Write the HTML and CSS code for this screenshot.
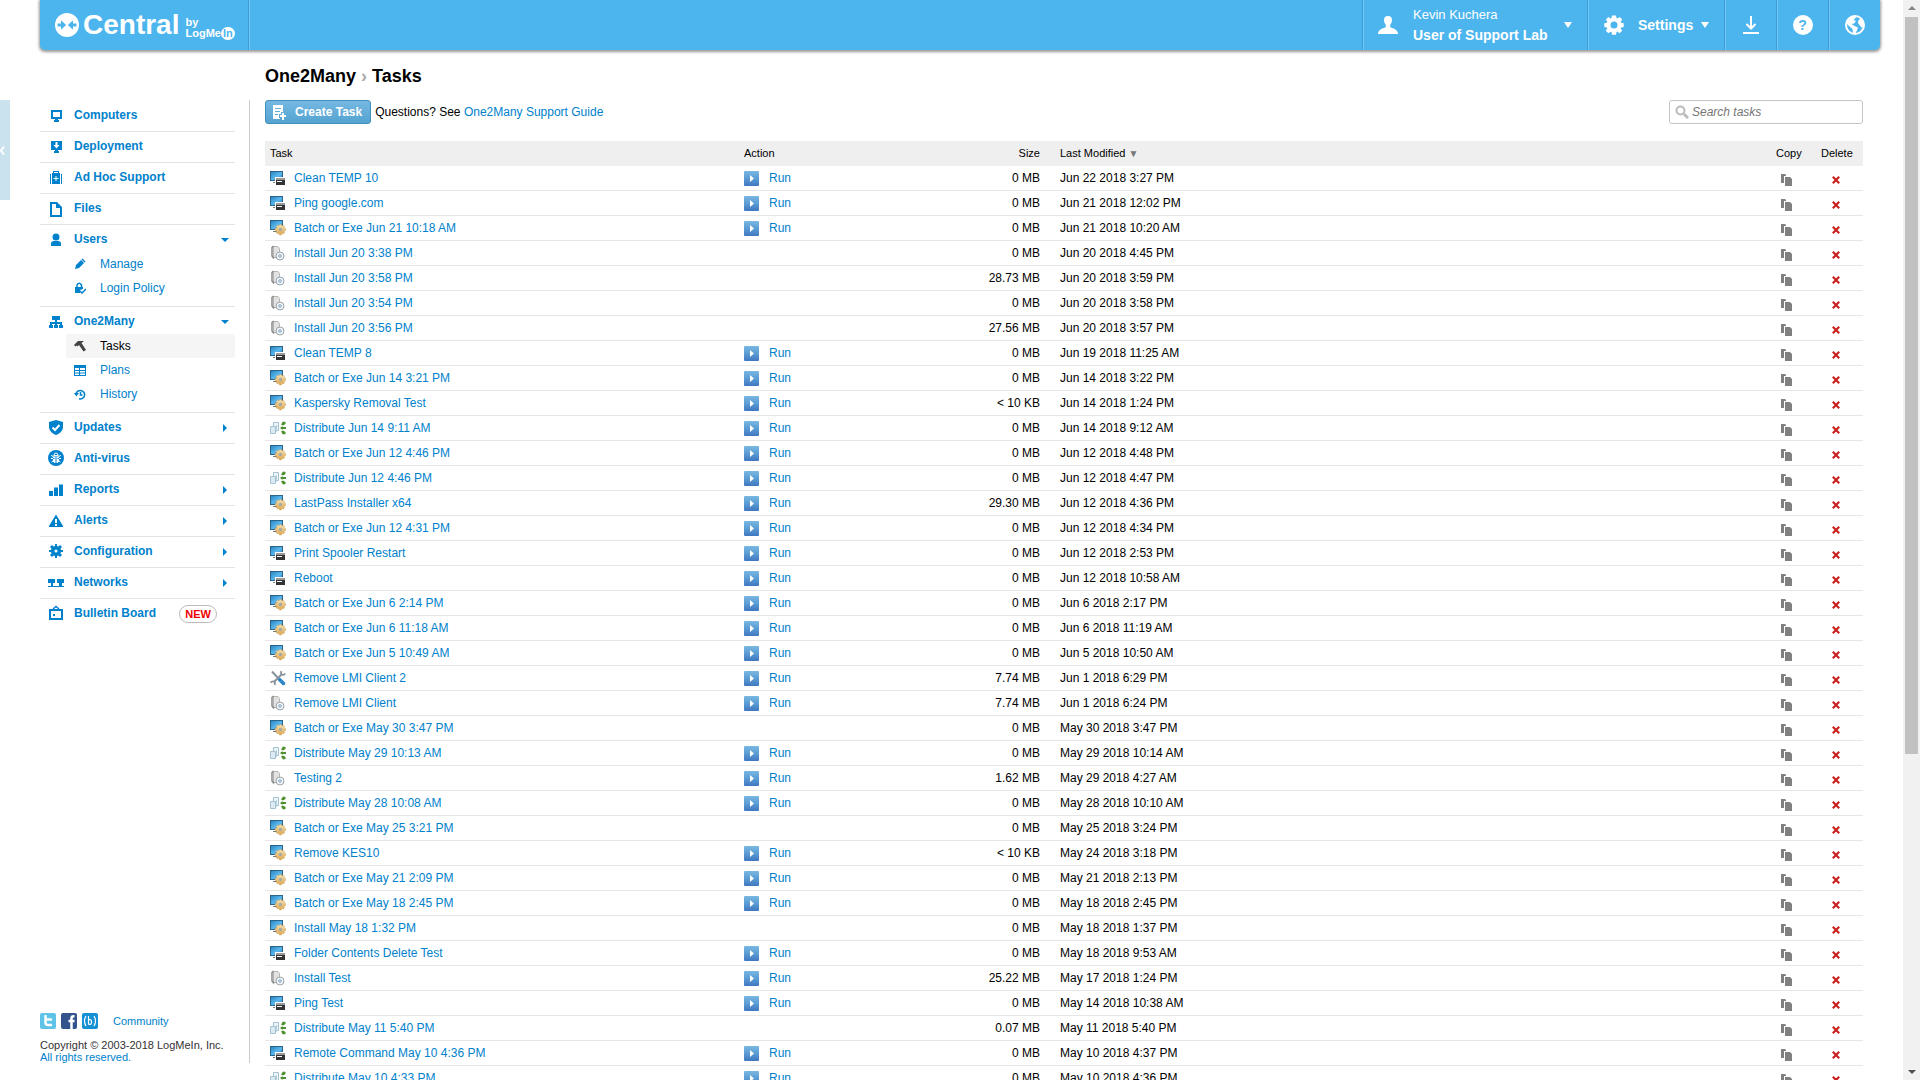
FILE: index.html
```html
<!DOCTYPE html>
<html lang="en">
<head>
    <meta charset="UTF-8">
    <title>One2Many Tasks</title>
    <link rel="stylesheet" href="styles.css">
</head>
<body>
    <!-- shared icons -->
    <svg class="defs" aria-hidden="true">
        <defs>
            <linearGradient id="screen" x1="0" y1="0" x2="1" y2="1"><stop offset="0" stop-color="#2a86c0"/><stop offset=".55" stop-color="#5bb8ee"/><stop offset="1" stop-color="#1d6fa8"/></linearGradient>
            <linearGradient id="gold" x1="0" y1="0" x2="0" y2="1"><stop offset="0" stop-color="#f7e2b5"/><stop offset="1" stop-color="#dba54a"/></linearGradient>
            <linearGradient id="play" x1="0" y1="0" x2="0" y2="1"><stop offset="0" stop-color="#7ab8e2"/><stop offset=".5" stop-color="#5a9cd4"/><stop offset="1" stop-color="#3f77c0"/></linearGradient>
        </defs>
        <symbol id="i-command" viewBox="0 0 16 16"><path fill="#2b6488" d="M0 1h13v10H0z"/><path fill="url(#screen)" d="M1 2h11v8H1z"/><path fill="#777" d="M3 12h4v1H3z"/><path fill="#fff" d="M5 7h10v1H6v6H5z"/><path fill="#333" d="M6 8h9v7H6z"/><path fill="#999" d="M6 8h9v2H6z"/><path fill="#fff" d="M7 11h5v1H7z"/></symbol>
        <symbol id="i-batch" viewBox="0 0 16 16"><path fill="#2b6488" d="M0 0h13v10H0z"/><path fill="url(#screen)" d="M1 1h11v8H1z"/><path fill="#777" d="M3 11h4v1H3z"/><g fill="url(#gold)" stroke="#c99b4e" stroke-width=".4"><path d="M9.500 4.500h2l.4 1.500 1.300-.9 1.500 1.500-.8 1.400 1.900.5v2l-1.900.5.8 1.400-1.500 1.500-1.400-.8-.4 1.900h-2l-.4-1.900-1.400.8-1.500-1.500.8-1.400-1.900-.5v-2l1.900-.5-.8-1.400 1.500-1.500 1.300.9z"/></g><circle cx="10.500" cy="9.500" r="1.700" fill="#a7a9a5"/></symbol>
        <symbol id="i-install" viewBox="0 0 16 16"><path fill="#e2e2e2" stroke="#b5b5b5" d="M3.500 1.500 8 1.500l1.500 2v9h-6z"/><path stroke="#8a8a8a" stroke-width="1.500" fill="none" d="M3.500 1 2 2.500v8.500l2 2.500"/><circle cx="10" cy="11" r="4" fill="#f3f5f8" stroke="#9aa3ab"/><circle cx="10" cy="11" r="1.300" fill="#fff" stroke="#7aa0c0"/></symbol>
        <symbol id="i-distribute" viewBox="0 0 16 16"><path fill="#eef5f9" stroke="#a5c2d2" d="M3.500 2.500h5v8h-5z"/><path fill="#dcebf3" stroke="#a5c2d2" d="M.5 6.500h5v7h-5z"/><path fill="none" stroke="#b9d1dd" d="M6.500 5v7"/><path fill="#4f8f2c" d="m10 8 2.500-2v1H16v2h-3.500v1zM11 4.500 13 1.500l2.500.5v2L13 5.500zM11 11.500l2-1 2.500 1.500v2l-2.500.5z"/></symbol>
        <symbol id="i-tools" viewBox="0 0 16 16"><path fill="none" stroke="#8b9298" stroke-width="2" d="M2 1.500 9 9"/><path fill="none" stroke="#2a86c8" stroke-width="3.500" stroke-linecap="round" d="m9.500 9.500 4 4"/><path fill="none" stroke="#8b9298" stroke-width="2" d="m4 12 8-8"/><path fill="none" stroke="#8b9298" stroke-width="1.800" d="M11.500 1.200c-1 2-.2 3.500 1.200 3.700 1 .1 2-.4 2.600-1.400M4.500 15c1-2 .2-3.500-1.200-3.700-1-.1-2 .4-2.600 1.400"/></symbol>
        <symbol id="i-run" viewBox="0 0 15 15"><rect width="15" height="15" rx="1" fill="url(#play)"/><path fill="#fff" d="m6 4 4 3.500L6 11z"/></symbol>
        <symbol id="i-copy" viewBox="0 0 12 12"><path fill="#808080" d="M0 0h4l1 1v1H3v7H0zM4 3h5l2 2v7H4z"/></symbol>
        <symbol id="i-delete" viewBox="0 0 8 8"><path fill="none" stroke="#c92020" stroke-width="2.200" d="m.8.800 6.400 6.400m0-6.400L.8 7.200"/></symbol>
        <symbol id="i-gear" viewBox="0 0 20 20"><path fill-rule="evenodd" d="M8 .5h4l.5 2.600 1 .4 2.200-1.500 2.500 2.500-1.500 2.200.4 1 2.600.5v3.800l-2.600.5-.4 1 1.500 2.200-2.500 2.500-2.200-1.500-1 .4-.5 2.600H8l-.5-2.600-1-.4-2.200 1.500-2.500-2.500 1.500-2.200-.4-1L.3 12V8.200l2.600-.5.4-1-1.500-2.200L4.300 2l2.200 1.500 1-.4zM10 6.600a3.500 3.500 0 1 0 0 7 3.500 3.500 0 0 0 0-7z"/></symbol>
    </svg>

    <div class="page">
        <button class="collapse" type="button" aria-label="Collapse menu"><svg width="5" height="9" viewBox="0 0 5 9"><path d="M4 .5 1 4.500l3 4" fill="none" stroke="#fff" stroke-width="2"/></svg></button>

        <div class="shell">
            <header class="topbar">
                <a class="logo" href="#">
                    <svg width="24" height="24" viewBox="0 0 24 24"><circle cx="12" cy="12" r="12" fill="#fff"/><path fill="#4db5ee" d="M2.500 10.500H6V7.500c2 1 3 3 5.200 4.500C9 13.500 8 15.500 6 16.500v-3H2.500zM21.500 10.500H18V7.500c-2 1-3 3-5.200 4.500 2.200 1.500 3.200 3.500 5.200 4.500v-3h3.500z"/></svg>
                    <span class="logo-name">Central</span>
                    <span class="logo-by">by<br>LogMe<i>In</i></span>
                </a>
                <button class="top-item user" type="button">
                    <svg width="20" height="18" viewBox="0 0 20 18"><path fill="#fff" d="M10 0c3 0 4.200 2 4 4.500-.2 2-1 3.200-1.800 4.200v2.500c1.800 1 7.800 1.600 7.800 6.800H0c0-5.200 6-5.800 7.800-6.800V8.700C7 7.700 6.200 6.500 6 4.500 5.800 2 7 0 10 0z"/></svg>
                    <span class="user-text">Kevin Kuchera<b>User of Support Lab</b></span>
                    <span class="caret"></span>
                </button>
                <button class="top-item settings" type="button">
                    <svg width="20" height="20" fill="#fff"><use href="#i-gear"/></svg>
                    <b>Settings</b>
                    <span class="caret"></span>
                </button>
                <button class="top-item square" type="button" aria-label="Download"><svg width="16" height="18" viewBox="0 0 16 18"><path fill="none" stroke="#fff" stroke-width="2" d="M8 0v12M3.500 8 8 12.500 12.500 8M0 17h16"/></svg></button>
                <button class="top-item square" type="button" aria-label="Help"><span class="help">?</span></button>
                <button class="top-item square" type="button" aria-label="Language"><svg width="20" height="20" viewBox="0 0 20 20"><circle cx="10" cy="10" r="9" fill="#4db5ee" stroke="#fff" stroke-width="2"/><path fill="#fff" d="M1 8c1-4 4-7 8-7l2 1.500L8.500 5l2.500 1-2 2.500L6.500 9l3 2 3.500 1.500-1 3-2 3.500-2-1-.5-4L4 11zM13.500 5 16 3.500c2 2 3 4 3 7l-2 2.500-2.500-3-1.500-2z"/></svg></button>
            </header>

            <div class="columns">
                <aside class="sidebar">
                    <ul class="menu">
                        <li><a href="#"><svg viewBox="0 0 16 16"><path fill-rule="evenodd" d="M3 3h11v9H3zm2 2v5h7V5zM7 12h3v1h1v2H6v-2h1z"/></svg>Computers</a></li>
                        <li><a href="#"><svg viewBox="0 0 16 16"><path fill-rule="evenodd" d="M3 3h11v9h-4v1h1v2H6v-2h1v-1H3zm4.500 1v3H5.500l3 3.500 3-3.500h-2V4z"/></svg>Deployment</a></li>
                        <li><a href="#"><svg viewBox="0 0 16 16"><path fill-rule="evenodd" d="M2 5h1v10H2zm11 0h1v10h-1zM4 4h1V2h6v2h1v11H4zm2 0h4V3H6zm1.500 3v2h-2v1h2v2h1v-2h2V9h-2V7z"/></svg>Ad Hoc Support</a></li>
                        <li><a href="#"><svg viewBox="0 0 16 16"><path fill-rule="evenodd" d="M2 2h7l5 5v10H2zm2 2v11h8V8H8V4z"/></svg>Files</a></li>
                        <li class="open"><a href="#"><svg viewBox="0 0 16 16"><circle cx="8" cy="6" r="3.500"/><path d="M3 15v-2c0-2 1-3 3-3h4c2 0 3 1 3 3v2z"/></svg>Users</a>
                            <ul>
                                <li><a href="#"><svg viewBox="0 0 12 12"><path d="m1 11 1-4 5-5 3 3-5 5zM7.500 1.500l1-1 3 3-1 1z"/></svg>Manage</a></li>
                                <li><a href="#"><svg viewBox="0 0 12 12"><path fill="none" stroke="currentColor" stroke-width="1.500" d="M3 5V3q2-3.500 4.500 0v2"/><path d="M1 5h8v2L6 8v3H1z"/><path fill="none" stroke="currentColor" stroke-width="1.500" d="m6 9 2 2 4-4"/></svg>Login Policy</a></li>
                            </ul>
                        </li>
                        <li class="open"><a href="#"><svg viewBox="0 0 16 16"><path d="M4 3h8v4H9v2h5v3h1v3h-4v-3h1v-1H9v1h1v3H6v-3h1v-1H4v1h1v3H1v-3h1V9h5V7H4z"/></svg>One2Many</a>
                            <ul>
                                <li class="current"><a href="#"><svg viewBox="0 0 12 12"><path d="m0 5 4-4h6L7.500 3 12 10l-2.500 1.500L5 5 3.500 6.500 2.500 5.500 1.500 6.500z"/></svg>Tasks</a></li>
                                <li><a href="#"><svg viewBox="0 0 12 12"><path fill-rule="evenodd" d="M0 1h12v11H0zm1 3v2h4V4zm5 0v2h5V4zM1 7v1.500h4V7zm5 0v1.500h5V7zM1 9.500V11h4V9.500zm5 0V11h5V9.500z"/></svg>Plans</a></li>
                                <li><a href="#"><svg viewBox="0 0 12 12"><path fill="none" stroke="currentColor" stroke-width="1.500" d="M2 6.500a4.300 4.300 0 1 1 3 4.300M6.500 4v3h2"/><path d="M0 5h5L2.300 8.500z"/></svg>History</a></li>
                            </ul>
                        </li>
                        <li class="more"><a href="#"><svg viewBox="0 0 16 16"><path d="m8 1 7 2v5c0 4-4 7-7 8-3-1-7-4-7-8V3z"/><path fill="none" stroke="#fff" stroke-width="2" d="m4.500 8.500 2.500 2.500 4.500-5"/></svg>Updates</a></li>
                        <li><a href="#"><svg viewBox="0 0 16 16"><circle cx="8" cy="8" r="8"/><path fill="#fff" d="M5 6.500h6v5L9.500 13h-3L5 11.500z"/><path fill="none" stroke="#fff" d="M6 5q0-2 2-2t2 2M3 5.500l2.500 1m7.500-1-2.500 1M3 8.500h2.500m7.500 0h-2.500M3.500 12l2-1.500m7 1.500-2-1.500M5.500 5.500h5"/><path stroke="currentColor" d="M8 7v6M5 8.500h1.500M9.500 8.500H11"/></svg>Anti-virus</a></li>
                        <li class="more"><a href="#"><svg viewBox="0 0 16 16"><path d="M1 10h4v5H1zM6 6.500h4V15H6zM11 3.500h4V15h-4z"/></svg>Reports</a></li>
                        <li class="more"><a href="#"><svg viewBox="0 0 16 16"><path fill-rule="evenodd" d="M8 2.500 15 14v1H1v-1zM7 7v4h2V7zm0 5v2h2v-2z"/></svg>Alerts</a></li>
                        <li class="more"><a href="#"><svg viewBox="0 0 16 16"><path fill-rule="evenodd" d="M7 1h2v2l1.500.6L12 2l2 2-1.500 1.500L13 7h2v2h-2l-.5 1.500L14 12l-2 2-1.500-1.500L9 13v2H7v-2l-1.500-.5L4 14l-2-2 1.500-1.500L3 9H1V7h2l.5-1.500L2 4l2-2 1.500 1.600L7 3zm1 5.500a1.500 1.500 0 1 0 0 3 1.500 1.500 0 0 0 0-3z"/></svg>Configuration</a></li>
                        <li class="more"><a href="#"><svg viewBox="0 0 16 16"><path d="M0 5h7v4H5v3h6V9H9V5h7v4h-2v3h2v1H0v-1h3V9H0z"/></svg>Networks</a></li>
                        <li><a href="#"><svg viewBox="0 0 16 16"><path fill-rule="evenodd" d="M1 4h14v11H1zm2 2v7h10V6zm2 3h2v2H5z"/><path fill="none" stroke="currentColor" stroke-width="1.500" d="m5 4 3-2.500L11 4"/></svg>Bulletin Board</a><span class="new">NEW</span></li>
                    </ul>
                    <footer class="footer">
                        <div class="social">
                            <a href="#" aria-label="Twitter"><svg width="16" height="16" viewBox="0 0 16 16"><rect width="16" height="16" rx="2" fill="#5fc3e8"/><path fill="none" stroke="#fff" stroke-width="2.500" stroke-linecap="round" d="M5.500 3v6.500q0 2.500 2.500 2.500h3M5.500 6.500h5.500"/></svg></a>
                            <a href="#" aria-label="Facebook"><svg width="16" height="16" viewBox="0 0 16 16"><rect width="16" height="16" rx="2" fill="#34538c"/><path fill="none" stroke="#fff" stroke-width="2.500" d="M13.500 3.200h-1q-2 0-2 2V16M7.500 8h6"/></svg></a>
                            <a href="#" aria-label="Blog"><svg width="16" height="16" viewBox="0 0 16 16"><rect width="16" height="16" rx="2" fill="#1590d4"/><path fill="none" stroke="#fff" stroke-width="1.200" d="M4 3Q1 8 4 13M12 3q3 5 0 10M6.500 3v8.500M6.500 7q3-1.500 3 2t-3 2"/></svg></a>
                            <a class="community" href="#">Community</a>
                        </div>
                        <div>Copyright © 2003-2018 LogMeIn, Inc.</div>
                        <a href="#">All rights reserved.</a>
                    </footer>
                </aside>

                <main class="content">
                    <h1>One2Many <span>›</span> Tasks</h1>
                    <div class="toolbar">
                        <button class="create" type="button"><svg width="13" height="15" viewBox="0 0 13 15"><path fill="#fff" fill-rule="evenodd" d="M0 0h10v7H8v2H6v4h1v1H0zm2 3v1h6V3zm0 3v1h5V6zm0 3v1h3V9zM9 8h2v2h2v2h-2v3H9v-3H7v-2h2z"/></svg>Create Task</button>
                        <span>Questions? See <a href="#">One2Many Support Guide</a></span>
                        <label class="search">
                            <svg width="14" height="14" viewBox="0 0 14 14"><circle cx="5.500" cy="5.500" r="4" fill="none" stroke="#bbb" stroke-width="2"/><path stroke="#bbb" stroke-width="3" d="m9 9 4 4"/></svg>
                            <input type="text" placeholder="Search tasks" aria-label="Search tasks">
                        </label>
                    </div>
                    <table class="tasks">
                        <thead>
                            <tr><th class="name">Task</th><th class="action">Action</th><th class="size">Size</th><th class="date">Last Modified <span>▼</span></th><th class="copy">Copy</th><th class="delete">Delete</th></tr>
                        </thead>
                        <tbody id="task-rows"></tbody>
                    </table>
                </main>
            </div>
        </div>

        <div class="scrollbar" aria-hidden="true"><i class="up"></i><i class="thumb"></i><i class="down"></i></div>
    </div>
    <script src="tasks.js"></script>
</body>
</html>
```
FILE: styles.css
```css
* { box-sizing: border-box; }
body { margin: 0; background: #fff; color: #000; font: 12px/14px "Liberation Sans", Arial, sans-serif; }
a { color: #0081cc; text-decoration: none; }
button { font: inherit; border: 0; padding: 0; background: none; color: inherit; cursor: pointer; }
svg { display: block; flex: none; }
ul { list-style: none; margin: 0; padding: 0; }
.defs { position: absolute; width: 0; height: 0; }

.page { display: flex; height: 100vh; overflow: hidden; }
.shell { flex: 1; min-width: 0; display: flex; flex-direction: column; padding: 0 23px 0 30px; }
.collapse { flex: none; width: 10px; height: 100px; margin-top: 100px; background: #c9e2ee; }

/* top bar */
.topbar { flex: none; display: flex; height: 50px; background: #4db5ee; color: #fff; border-radius: 0 0 5px 5px; box-shadow: 0 1px 3px 1px rgba(0, 0, 0, .4); }
.logo { display: flex; align-items: center; width: 209px; margin-right: auto; padding-left: 15px; color: #fff; border-right: 1px solid #3a9fdd; box-shadow: 1px 0 #74c7f4; }
.logo-name { margin: 0 6px 0 4px; font: bold 28px/32px "Liberation Sans", Arial, sans-serif; }
.logo-by { font-size: 11px; font-weight: bold; line-height: 10px; padding-top: 6px; white-space: nowrap; }
.logo-by i { display: inline-block; width: 14px; border-radius: 7px; background: #fff; color: #4db5ee; font-style: normal; line-height: 13px; text-align: center; }
.top-item { display: flex; align-items: center; border-left: 1px solid #3a9fdd; box-shadow: inset 1px 0 #74c7f4; text-align: left; }
.user { width: 225px; padding: 0 15px 0 15px; font-size: 13px; }
.user-text { margin: 0 auto 0 15px; padding-bottom: 1px; line-height: 20px; }
.user-text b { display: block; font-size: 14px; }
.settings { width: 137px; padding-left: 16px; font-size: 14px; }
.settings b { margin: 0 8px 0 14px; }
.square { width: 52px; justify-content: center; }
.caret { border: 4px solid transparent; border-top: 6px solid #fff; border-bottom: 0; }
.help { width: 20px; height: 20px; border-radius: 50%; background: #fff; color: #4db5ee; font-weight: bold; font-size: 14px; line-height: 20px; text-align: center; }

.columns { flex: 1; display: flex; min-height: 0; }

/* left menu */
.sidebar { flex: none; display: flex; flex-direction: column; width: 210px; margin: 50px 15px 17px 0; padding: 1px 14px 0 0; border-right: 1px solid #ccc; }
.menu > li { position: relative; padding-bottom: 3px; border-bottom: 1px solid #e3e3e3; }
.menu > li:last-child { border-bottom: 0; }
.menu > li > a { display: flex; height: 27px; padding-left: 8px; font-weight: bold; line-height: 28px; }
.menu > li > a svg { width: 16px; height: 16px; margin: 6px 10px 0 0; overflow: visible; }
.menu svg { fill: currentColor; }
.menu ul { padding-bottom: 3px; }
.menu ul a { display: flex; align-items: center; height: 24px; margin-left: 26px; padding-left: 8px; }
.menu ul svg { width: 12px; height: 12px; margin-right: 14px; }
.menu .current a { background: #f5f5f5; border-radius: 3px; color: #000; }
.menu .current svg { fill: #444; }
.more::after, .open::after { content: ""; position: absolute; top: 11px; right: 8px; border: 4px solid transparent; border-left-color: #0081cc; border-right: 0; }
.open::after { top: 13px; right: 6px; border: 4px solid transparent; border-top-color: #0081cc; border-bottom: 0; }
.new { position: absolute; top: 6px; right: 18px; padding: 0 5px; border: 1px solid #bbb; border-radius: 9px; color: #f10000; font-size: 11px; font-weight: bold; line-height: 16px; }
.footer { margin-top: auto; font-size: 11px; line-height: 12px; color: #333; }
.social { display: flex; align-items: center; gap: 5px; margin-bottom: 10px; }
.community { margin-left: 10px; }

/* main */
.content { flex: 1; min-width: 0; padding-right: 17px; }
h1 { margin: 16px 0 14px; font-size: 18px; line-height: 20px; }
h1 span { color: #aaa; }
.toolbar { display: flex; align-items: center; gap: 4px; height: 24px; margin-bottom: 17px; }
.create { display: flex; align-items: center; gap: 9px; height: 24px; padding: 0 8px 0 7px; border: 1px solid #4090ba; border-radius: 3px; background: linear-gradient(#74b8e2, #55a3d0); color: #fff; font-weight: bold; }
.search { display: flex; align-items: center; width: 194px; height: 24px; margin-left: auto; padding-left: 5px; border: 1px solid #c5c5c5; border-radius: 3px; }
.search input { flex: 1; min-width: 0; padding: 0 3px; border: 0; outline: 0; font: inherit; font-style: italic; }
.search input::placeholder { color: #757575; }

.tasks { width: 100%; border-spacing: 0; table-layout: fixed; }
.tasks th { height: 25px; padding: 0; background: #efefef; font-size: 11px; line-height: 13px; font-weight: normal; text-align: left; }
.tasks td { height: 25px; padding: 0; border-bottom: 1px solid #e6e6e6; }
.tasks th span { font-size: 10px; line-height: 10px; color: #777; }
.tasks a { display: flex; align-items: center; }
.tasks .name { width: 479px; padding-left: 5px; }
.name a { gap: 8px; }
.tasks td.name { padding-bottom: 1px; }
.tasks .action { width: 200px; }
.action a { gap: 10px; }
.tasks .size { width: 96px; text-align: right; }
.tasks .date { padding-left: 20px; }
.tasks .copy { width: 50px; padding-left: 13px; }
.tasks .delete { width: 50px; padding-left: 8px; }
.tasks td.copy { padding: 3px 0 0 18px; }
.tasks td.delete { padding: 3px 0 0 19px; }
td button { display: block; }

.scrollbar { flex: none; display: flex; flex-direction: column; align-items: center; width: 17px; padding: 6px 0; background: #f1f1f1; }
.scrollbar i { display: block; }
.up { border: 4px solid transparent; border-bottom-color: #888; border-top: 0; margin-bottom: 7px; }
.thumb { width: 13px; height: 69%; background: #c1c1c1; }
.down { margin-top: auto; border: 4px solid transparent; border-top-color: #505050; border-bottom: 0; }
```
FILE: tasks.js
```js
// icon, name, runnable, size, last modified
const tasks = [
    ["command", "Clean TEMP 10", 1, "0 MB", "Jun 22 2018 3:27 PM"],
    ["command", "Ping google.com", 1, "0 MB", "Jun 21 2018 12:02 PM"],
    ["batch", "Batch or Exe Jun 21 10:18 AM", 1, "0 MB", "Jun 21 2018 10:20 AM"],
    ["install", "Install Jun 20 3:38 PM", 0, "0 MB", "Jun 20 2018 4:45 PM"],
    ["install", "Install Jun 20 3:58 PM", 0, "28.73 MB", "Jun 20 2018 3:59 PM"],
    ["install", "Install Jun 20 3:54 PM", 0, "0 MB", "Jun 20 2018 3:58 PM"],
    ["install", "Install Jun 20 3:56 PM", 0, "27.56 MB", "Jun 20 2018 3:57 PM"],
    ["command", "Clean TEMP 8", 1, "0 MB", "Jun 19 2018 11:25 AM"],
    ["batch", "Batch or Exe Jun 14 3:21 PM", 1, "0 MB", "Jun 14 2018 3:22 PM"],
    ["batch", "Kaspersky Removal Test", 1, "< 10 KB", "Jun 14 2018 1:24 PM"],
    ["distribute", "Distribute Jun 14 9:11 AM", 1, "0 MB", "Jun 14 2018 9:12 AM"],
    ["batch", "Batch or Exe Jun 12 4:46 PM", 1, "0 MB", "Jun 12 2018 4:48 PM"],
    ["distribute", "Distribute Jun 12 4:46 PM", 1, "0 MB", "Jun 12 2018 4:47 PM"],
    ["batch", "LastPass Installer x64", 1, "29.30 MB", "Jun 12 2018 4:36 PM"],
    ["batch", "Batch or Exe Jun 12 4:31 PM", 1, "0 MB", "Jun 12 2018 4:34 PM"],
    ["command", "Print Spooler Restart", 1, "0 MB", "Jun 12 2018 2:53 PM"],
    ["command", "Reboot", 1, "0 MB", "Jun 12 2018 10:58 AM"],
    ["batch", "Batch or Exe Jun 6 2:14 PM", 1, "0 MB", "Jun 6 2018 2:17 PM"],
    ["batch", "Batch or Exe Jun 6 11:18 AM", 1, "0 MB", "Jun 6 2018 11:19 AM"],
    ["batch", "Batch or Exe Jun 5 10:49 AM", 1, "0 MB", "Jun 5 2018 10:50 AM"],
    ["tools", "Remove LMI Client 2", 1, "7.74 MB", "Jun 1 2018 6:29 PM"],
    ["install", "Remove LMI Client", 1, "7.74 MB", "Jun 1 2018 6:24 PM"],
    ["batch", "Batch or Exe May 30 3:47 PM", 0, "0 MB", "May 30 2018 3:47 PM"],
    ["distribute", "Distribute May 29 10:13 AM", 1, "0 MB", "May 29 2018 10:14 AM"],
    ["install", "Testing 2", 1, "1.62 MB", "May 29 2018 4:27 AM"],
    ["distribute", "Distribute May 28 10:08 AM", 1, "0 MB", "May 28 2018 10:10 AM"],
    ["batch", "Batch or Exe May 25 3:21 PM", 0, "0 MB", "May 25 2018 3:24 PM"],
    ["batch", "Remove KES10", 1, "< 10 KB", "May 24 2018 3:18 PM"],
    ["batch", "Batch or Exe May 21 2:09 PM", 1, "0 MB", "May 21 2018 2:13 PM"],
    ["batch", "Batch or Exe May 18 2:45 PM", 1, "0 MB", "May 18 2018 2:45 PM"],
    ["batch", "Install May 18 1:32 PM", 0, "0 MB", "May 18 2018 1:37 PM"],
    ["command", "Folder Contents Delete Test", 1, "0 MB", "May 18 2018 9:53 AM"],
    ["install", "Install Test", 1, "25.22 MB", "May 17 2018 1:24 PM"],
    ["command", "Ping Test", 1, "0 MB", "May 14 2018 10:38 AM"],
    ["distribute", "Distribute May 11 5:40 PM", 0, "0.07 MB", "May 11 2018 5:40 PM"],
    ["command", "Remote Command May 10 4:36 PM", 1, "0 MB", "May 10 2018 4:37 PM"],
    ["distribute", "Distribute May 10 4:33 PM", 1, "0 MB", "May 10 2018 4:36 PM"]
];

const icon = (id, w) => `<svg width="${w}" height="${w}"><use href="#i-${id}"/></svg>`;

document.getElementById("task-rows").innerHTML = tasks.map(([type, name, run, size, date]) => `
    <tr>
        <td class="name"><a href="#">${icon(type, 16)}${name}</a></td>
        <td class="action">${run ? `<a href="#">${icon("run", 15)}Run</a>` : ""}</td>
        <td class="size">${size.replace("<", "&lt;")}</td>
        <td class="date">${date}</td>
        <td class="copy"><button type="button" aria-label="Copy">${icon("copy", 12)}</button></td>
        <td class="delete"><button type="button" aria-label="Delete">${icon("delete", 8)}</button></td>
    </tr>`).join("");
```
